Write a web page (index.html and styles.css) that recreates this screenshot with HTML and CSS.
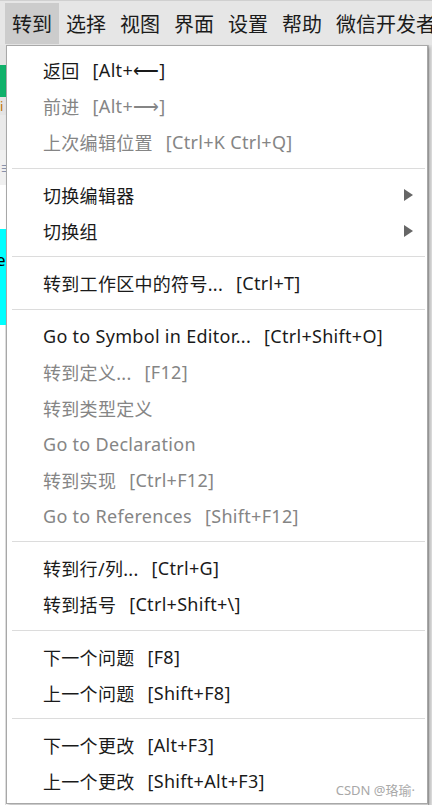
FILE: index.html
```html
<!DOCTYPE html>
<html lang="zh-CN">
<head>
<meta charset="utf-8">
<title>转到</title>
<link rel="stylesheet" href="styles.css">
</head>
<body>
<div class="app">
  <nav class="menubar">
    <span class="mb-item active">转到</span>
    <span class="mb-item">选择</span>
    <span class="mb-item">视图</span>
    <span class="mb-item">界面</span>
    <span class="mb-item">设置</span>
    <span class="mb-item">帮助</span>
    <span class="mb-item">微信开发者</span>
  </nav>
  <div class="workspace">
    <div class="edge-left">
      <div class="blk b-gray"></div>
      <div class="blk b-green"></div>
      <div class="blk b-info">i</div>
      <div class="blk b-light"></div>
      <div class="blk b-lines">≡</div>
      <div class="blk b-white"></div>
      <div class="blk b-cyan">e</div>
      <div class="blk b-rest"></div>
    </div>
    <div class="menu">
      <div class="row"><span class="lbl">返回</span><span class="key">[Alt+⟵]</span></div>
      <div class="row dis"><span class="lbl">前进</span><span class="key">[Alt+⟶]</span></div>
      <div class="row dis"><span class="lbl">上次编辑位置</span><span class="key">[Ctrl+K Ctrl+Q]</span></div>
      <div class="sep"></div>
      <div class="row sub"><span class="lbl">切换编辑器</span><span class="arrow"></span></div>
      <div class="row sub"><span class="lbl">切换组</span><span class="arrow"></span></div>
      <div class="sep"></div>
      <div class="row"><span class="lbl">转到工作区中的符号...</span><span class="key">[Ctrl+T]</span></div>
      <div class="sep"></div>
      <div class="row"><span class="lbl">Go to Symbol in Editor...</span><span class="key">[Ctrl+Shift+O]</span></div>
      <div class="row dis"><span class="lbl">转到定义...</span><span class="key">[F12]</span></div>
      <div class="row dis"><span class="lbl">转到类型定义</span></div>
      <div class="row dis"><span class="lbl">Go to Declaration</span></div>
      <div class="row dis"><span class="lbl">转到实现</span><span class="key">[Ctrl+F12]</span></div>
      <div class="row dis"><span class="lbl">Go to References</span><span class="key">[Shift+F12]</span></div>
      <div class="sep"></div>
      <div class="row"><span class="lbl">转到行/列...</span><span class="key">[Ctrl+G]</span></div>
      <div class="row"><span class="lbl">转到括号</span><span class="key">[Ctrl+Shift+\]</span></div>
      <div class="sep"></div>
      <div class="row"><span class="lbl">下一个问题</span><span class="key">[F8]</span></div>
      <div class="row"><span class="lbl">上一个问题</span><span class="key">[Shift+F8]</span></div>
      <div class="sep"></div>
      <div class="row"><span class="lbl">下一个更改</span><span class="key">[Alt+F3]</span></div>
      <div class="row"><span class="lbl">上一个更改</span><span class="key">[Shift+Alt+F3]</span></div>
      <span class="watermark">CSDN @珞瑜·</span>
    </div>
    <div class="edge-right"></div>
  </div>
</div>
</body>
</html>
```

FILE: styles.css
```css
* { box-sizing: border-box; }
html, body {
  margin: 0;
  padding: 0;
  width: 432px;
  height: 805px;
  overflow: hidden;
  background: #ffffff;
  font-family: "Noto Sans", "Noto Sans CJK SC", sans-serif;
}
.app {
  display: flex;
  flex-direction: column;
  height: 805px;
}
.menubar {
  display: flex;
  height: 45px;
  padding: 2px 0 1px 5px;
  background: #e6e6e6;
  white-space: nowrap;
  overflow: hidden;
  border-top: 1px solid #d0d0d0;
}
.mb-item {
  display: flex;
  align-items: center;
  padding: 0 7px;
  font-family: "Noto Sans CJK SC", sans-serif;
  font-size: 20px;
  color: #1b1b1b;
  flex: none;
}
.mb-item.active { background: #cccccc; }
.workspace {
  flex: 1;
  display: flex;
  min-height: 0;
}
.edge-left {
  width: 6px;
  display: flex;
  flex-direction: column;
  flex: none;
  overflow: hidden;
  font-size: 13px;
  line-height: 1;
}
.blk { flex: none; overflow: hidden; }
.b-gray { height: 20px; background: #e4e4e4; }
.b-green { height: 32px; background: #10b16a; }
.b-info { height: 18px; background: #e4e4e4; color: #c07000; padding-top: 3px; }
.b-light { height: 35px; background: #eaeaea; }
.b-lines { height: 35px; background: #f0f0f0; color: #7080a0; padding-top: 12px; }
.b-white { height: 44px; background: #ffffff; }
.b-cyan { height: 96px; background: #00ffff; color: #000; padding-top: 22px; font-size: 17px; margin-left: -4px; }
.b-rest { flex: 1; background: #ffffff; border-right: 1px solid #e0e0e0; }
.menu {
  position: relative;
  width: 422px;
  flex: none;
  align-self: flex-start;
  background: #ffffff;
  border: 1px solid #a8a8a8;
  box-shadow: 2px 2px 3px rgba(0,0,0,0.25);
  padding: 6px 0 4px 0;
  font-size: 18px;
  letter-spacing: 0.3px;
  color: #1a1a1a;
}
.row {
  display: flex;
  align-items: center;
  height: 36px;
  padding-left: 36px;
  padding-right: 14px;
  white-space: nowrap;
}
.row.dis { color: #858585; }
.lbl { margin-right: 13px; }
.row.sub .lbl { flex: 1; }
.arrow {
  width: 0;
  height: 0;
  border-top: 6px solid transparent;
  border-bottom: 6px solid transparent;
  border-left: 9px solid #666666;
}
.sep {
  height: 1px;
  background: #dcdcdc;
  margin: 7.5px 2px 8px 5px;
}
.watermark {
  position: absolute;
  right: 12px;
  bottom: 4px;
  font-family: "Noto Sans", "Noto Sans CJK SC", sans-serif;
  font-size: 13px;
  letter-spacing: 0;
  color: #a8a8a8;
}
.edge-right {
  flex: 1;
  background: #e2e2e2;
  border-left: 1px solid #bdbdbd;
}
```
